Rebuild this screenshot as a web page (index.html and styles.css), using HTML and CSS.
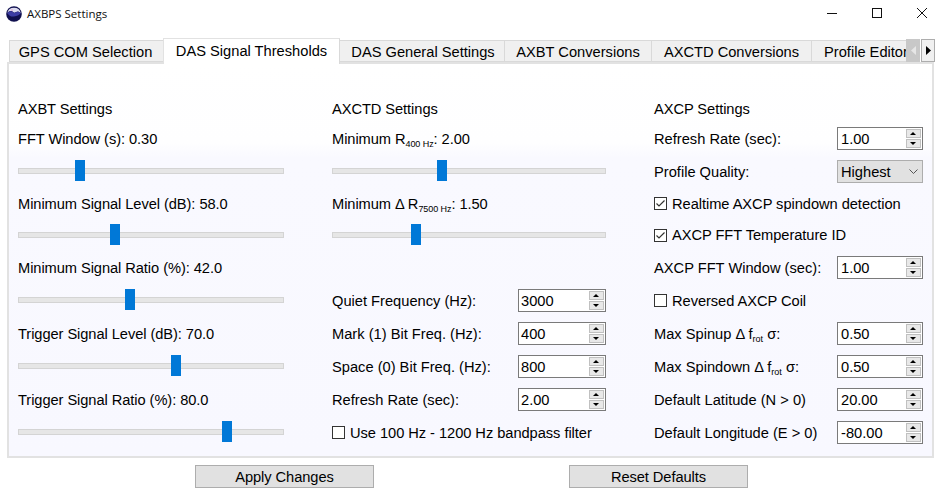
FILE: index.html
```html
<!DOCTYPE html>
<html lang="en">
<head>
<meta charset="utf-8">
<title>AXBPS Settings</title>
<link rel="stylesheet" href="styles.css">
</head>
<body>
<div class="window">
  <header class="titlebar">
    <svg class="app-icon" width="16" height="16" viewBox="0 0 16 16">
      <circle cx="8" cy="8" r="7.8" fill="#10104e"/>
      <path d="M1.2 7 A7 7 0 0 1 14.8 7 C13 5.5 11.5 5 10 6 C8.5 7 7.5 6.8 6.5 5.5 C5 4.5 3 5 1.2 7Z" fill="#dcdcf2"/>
      <path d="M1.2 7.2 C3 5.2 5 4.8 6.5 5.7 C7.5 7 8.5 7.2 10 6.2 C11.5 5.2 13 5.7 14.8 7.2 C13 9.5 11 9.5 8 10.5 C5 11 3 9.5 1.2 7.2Z" fill="#3c3ca4"/>
      <circle cx="6" cy="4" r="1" fill="#e6b8d8"/>
    </svg>
    <span class="title">AXBPS Settings</span>
    <div class="win-btns">
      <svg width="12" height="12" viewBox="0 0 12 12"><path d="M1 6.5H11" stroke="#111" fill="none"/></svg>
      <svg width="12" height="12" viewBox="0 0 12 12"><rect x="1.5" y="1.5" width="9" height="9" stroke="#111" fill="none"/></svg>
      <svg width="12" height="12" viewBox="0 0 12 12"><path d="M1 1L11 11M11 1L1 11" stroke="#111" fill="none"/></svg>
    </div>
  </header>

  <nav class="tabbar">
    <div class="tab tab-gps">GPS COM Selection</div>
    <div class="tab tab-active">DAS Signal Thresholds</div>
    <div class="tab tab-gen">DAS General Settings</div>
    <div class="tab tab-axbt">AXBT Conversions</div>
    <div class="tab tab-axctd">AXCTD Conversions</div>
    <div class="tab tab-prof">Profile Editor</div>
    <div class="tab-scroll">
      <div class="scroll-btn scroll-off"><svg width="5" height="9" viewBox="0 0 5 9"><path d="M5 0V9L0 4.5Z" fill="#e6e6e6"/></svg></div>
      <div class="scroll-btn"><svg width="5" height="9" viewBox="0 0 5 9"><path d="M0 0V9L5 4.5Z" fill="#000"/></svg></div>
    </div>
  </nav>

  <main class="panel">
    <section class="col col-a">
      <div class="lbl head">AXBT Settings</div>
      <div class="lbl">FFT Window (s): 0.30</div>
      <div class="slider sl-a1"><span class="thumb" style="left:57px"></span></div>
      <div class="lbl">Minimum Signal Level (dB): 58.0</div>
      <div class="slider sl-a2"><span class="thumb" style="left:92px"></span></div>
      <div class="lbl">Minimum Signal Ratio (%): 42.0</div>
      <div class="slider sl-a3"><span class="thumb" style="left:107px"></span></div>
      <div class="lbl lbl-far">Trigger Signal Level (dB): 70.0</div>
      <div class="slider sl-a3"><span class="thumb" style="left:153px"></span></div>
      <div class="lbl lbl-far">Trigger Signal Ratio (%): 80.0</div>
      <div class="slider sl-a3"><span class="thumb" style="left:204px"></span></div>
    </section>

    <section class="col col-b">
      <div class="lbl head">AXCTD Settings</div>
      <div class="lbl">Minimum R<sub>400 Hz</sub>: 2.00</div>
      <div class="slider sl-a1"><span class="thumb" style="left:105px"></span></div>
      <div class="lbl">Minimum Δ R<sub>7500 Hz</sub>: 1.50</div>
      <div class="slider sl-a2"><span class="thumb" style="left:79px"></span></div>
      <div class="row row-first"><span>Quiet Frequency (Hz):</span><div class="spin spin-b"><span>3000</span><div class="arrows"><i class="up"></i><i class="down"></i></div></div></div>
      <div class="row"><span>Mark (1) Bit Freq. (Hz):</span><div class="spin spin-b"><span>400</span><div class="arrows"><i class="up"></i><i class="down"></i></div></div></div>
      <div class="row"><span>Space (0) Bit Freq. (Hz):</span><div class="spin spin-b"><span>800</span><div class="arrows"><i class="up"></i><i class="down"></i></div></div></div>
      <div class="row"><span>Refresh Rate (sec):</span><div class="spin spin-b"><span>2.00</span><div class="arrows"><i class="up"></i><i class="down"></i></div></div></div>
      <div class="row check"><span class="box"></span><span>Use 100 Hz - 1200 Hz bandpass filter</span></div>
    </section>

    <section class="col col-c">
      <div class="lbl head">AXCP Settings</div>
      <div class="row row-top"><span>Refresh Rate (sec):</span><div class="spin"><span>1.00</span><div class="arrows"><i class="up"></i><i class="down"></i></div></div></div>
      <div class="row"><span>Profile Quality:</span><div class="combo"><span>Highest</span><svg width="9" height="5" viewBox="0 0 9 5"><path d="M.5 .5L4.5 4.5L8.5 .5" stroke="#555" fill="none"/></svg></div></div>
      <div class="row check row-31"><span class="box"><svg width="13" height="13" viewBox="0 0 13 13"><path d="M2.5 6.5L5 9L10.5 3.5" stroke="#333" stroke-width="1.2" fill="none"/></svg></span><span>Realtime AXCP spindown detection</span></div>
      <div class="row check row-32"><span class="box"><svg width="13" height="13" viewBox="0 0 13 13"><path d="M2.5 6.5L5 9L10.5 3.5" stroke="#333" stroke-width="1.2" fill="none"/></svg></span><span>AXCP FFT Temperature ID</span></div>
      <div class="row"><span>AXCP FFT Window (sec):</span><div class="spin"><span>1.00</span><div class="arrows"><i class="up"></i><i class="down"></i></div></div></div>
      <div class="row check"><span class="box"></span><span>Reversed AXCP Coil</span></div>
      <div class="row"><span>Max Spinup Δ f<sub>rot</sub> σ:</span><div class="spin"><span>0.50</span><div class="arrows"><i class="up"></i><i class="down"></i></div></div></div>
      <div class="row"><span>Max Spindown Δ f<sub>rot</sub> σ:</span><div class="spin"><span>0.50</span><div class="arrows"><i class="up"></i><i class="down"></i></div></div></div>
      <div class="row"><span>Default Latitude (N &gt; 0)</span><div class="spin"><span>20.00</span><div class="arrows"><i class="up"></i><i class="down"></i></div></div></div>
      <div class="row"><span>Default Longitude (E &gt; 0)</span><div class="spin"><span>-80.00</span><div class="arrows"><i class="up"></i><i class="down"></i></div></div></div>
    </section>
  </main>

  <footer class="actions">
    <button class="btn">Apply Changes</button>
    <button class="btn">Reset Defaults</button>
  </footer>
</div>
</body>
</html>
```
FILE: styles.css
```css
* { box-sizing: border-box; }
html, body { margin: 0; padding: 0; background: #fff; }
body {
  width: 941px;
  height: 496px;
  overflow: hidden;
  font-family: "Liberation Sans", Arial, sans-serif;
  font-size: 14.67px;
  color: #000;
}
.window { width: 941px; height: 496px; display: flex; flex-direction: column; }

.titlebar { height: 38px; display: flex; align-items: flex-start; padding: 6px 0 0 6px; }
.app-icon { flex: none; }
.title { font: 11.5px "Open Sans", sans-serif; margin: 0 0 0 5px; line-height: 16px; color: #111; }
.win-btns { margin-left: auto; display: flex; gap: 33px; padding: 1px 13px 0 0; }

.tabbar { height: 26px; margin-bottom: -2px; display: flex; align-items: flex-start; padding-left: 9px; position: relative; z-index: 1; overflow: hidden; width: 935px; }
.tab {
  flex: none;
  height: 22px;
  margin-top: 2px;
  line-height: 23px;
  background: #f0f0f0;
  border: 1px solid #d9d9d9;
  border-right-width: 0;
  text-align: center;
  white-space: nowrap;
}
.tab-gps { width: 154px; padding-right: 2px; }
.tab-active { width: 177px; height: 26px; margin-top: 0; background: #fff; border-color: #e2e2e2; border-right: 1px solid #d9d9d9; border-bottom: 0; line-height: 25px; }
.tab-gen { width: 164px; border-left: 0; padding-left: 2px; }
.tab-axbt { width: 147px; }
.tab-axctd { width: 160px; }
.tab-prof { width: 95px; text-align: left; padding-left: 12px; overflow: hidden; }
.tab-scroll { position: absolute; right: 0; top: 1px; display: flex; gap: 1px; height: 23px; width: 29px; background: #fff; }
.scroll-btn { width: 14px; height: 23px; border: 1px solid #adadad; background: #f0f0f0; display: flex; align-items: center; justify-content: center; }
.scroll-off { background: #c8c8c8; border-color: #c8c8c8; }

.panel {
  margin: 0 7px;
  height: 396px;
  background: linear-gradient(#fff, #fefeff 20%, #f9f9ff 24%, #f8f8ff);
  border: 2px solid #e2e2e2;
  display: grid;
  grid-template-columns: 266px 274px 269px;
  column-gap: 48px;
  padding: 0 0 0 9px;
  letter-spacing: -0.07px;
}
.col { display: flex; flex-direction: column; padding-top: 35px; }
.lbl { height: 20px; line-height: 20px; white-space: nowrap; }
.head { margin-bottom: 10px; }
.lbl-far { margin-top: 13px; }
.lbl + .slider { margin-top: 9px; }
.slider + .lbl { margin-top: 12px; }
.slider + .lbl-far { margin-top: 13px; }
.lbl + .sl-a2 { margin-top: 8px; }
.slider { height: 24px; position: relative; flex: none; }
.slider::before { content: ""; position: absolute; left: 0; right: 0; top: 10px; height: 4px; background: #e6e6e6; border: 1px solid #d4d4d4; }
.thumb { position: absolute; top: 2px; width: 10px; height: 21px; background: #0078d7; }
sub { font-size: 9px; line-height: 0; vertical-align: -3px; }

.row { height: 33px; display: flex; align-items: center; justify-content: space-between; white-space: nowrap; flex: none; letter-spacing: 0; }
.row-first { margin-top: 38px; }
.row-top { margin-top: -7px; }
.row-31 { height: 31px; }
.row-32 { height: 32px; }
.check { justify-content: flex-start; gap: 5px; letter-spacing: -0.05px; }
.box { width: 13px; height: 13px; background: #fff; border: 1px solid #333; display: flex; flex: none; align-items: center; justify-content: center; }
.box svg { flex: none; margin: -1px; }
.spin { width: 86px; height: 23px; background: #fff; border: 1px solid #7a7a7a; display: flex; align-items: center; justify-content: space-between; padding: 0 1px 0 3px; }
.spin-b { width: 88px; padding-left: 2px; }
.arrows { width: 15px; height: 19px; display: flex; flex-direction: column; gap: 1px; }
.arrows i { flex: 1; background: #e8e8e8; border: 1px solid #c0c0c0; position: relative; display: block; }
.arrows i::after { content: ""; position: absolute; left: 3px; border-left: 3px solid transparent; border-right: 3px solid transparent; }
.up::after { top: 2px; border-bottom: 3px solid #000; }
.down::after { top: 2px; border-top: 3px solid #000; }
.combo { width: 86px; height: 23px; background: #e1e1e1; border: 1px solid #adadad; display: flex; align-items: center; justify-content: space-between; padding: 0 4px 0 3px; }

.actions { flex: 1; display: flex; padding: 7px 0 0 195px; gap: 195px; align-items: flex-start; }
.btn { width: 179px; height: 23px; background: #e1e1e1; border: 1px solid #adadad; font: inherit; letter-spacing: -0.07px; padding: 0; color: #000; }
```
